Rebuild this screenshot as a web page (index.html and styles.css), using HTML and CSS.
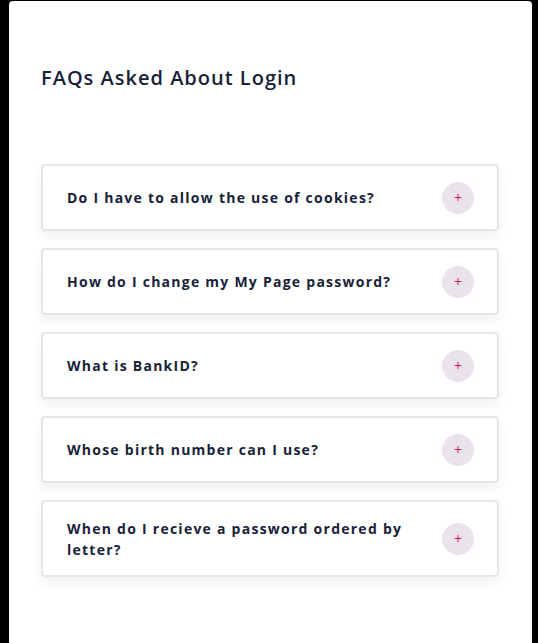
FILE: index.html
```html
<!DOCTYPE html>
<html>
<head>
<meta charset="utf-8">
<link rel="stylesheet" href="styles.css">
</head>
<body>
<div class="card">
  <h2 class="title">FAQs Asked About Login</h2>
  <div class="faq-list">
    <div class="faq-item"><span class="q">Do I have to allow the use of cookies?</span><span class="toggle">+</span></div>
    <div class="faq-item"><span class="q">How do I change my My Page password?</span><span class="toggle">+</span></div>
    <div class="faq-item"><span class="q">What is BankID?</span><span class="toggle">+</span></div>
    <div class="faq-item"><span class="q">Whose birth number can I use?</span><span class="toggle">+</span></div>
    <div class="faq-item"><span class="q">When do I recieve a password ordered by letter?</span><span class="toggle">+</span></div>
  </div>
</div>
</body>
</html>
```
FILE: styles.css
```css
html, body {
  margin: 0;
  padding: 0;
  background: #000;
  height: 100%;
  overflow: hidden;
}
body {
  font-family: "Open Sans", "Noto Sans", sans-serif;
  color: #172238;
}
.card {
  margin: 1px 0 0 9px;
  width: 523px;
  min-height: 700px;
  background: #fff;
  border-radius: 4px;
  padding: 62px 33px 40px 32px;
  box-sizing: border-box;
}
.title {
  margin: 0;
  font-size: 20px;
  font-weight: 600;
  letter-spacing: 1px;
  line-height: 30px;
  color: #172238;
}
.faq-list {
  margin-top: 71px;
  display: flex;
  flex-direction: column;
  gap: 17px;
}
.faq-item {
  display: flex;
  align-items: center;
  justify-content: space-between;
  gap: 20px;
  border: 2px solid #e9e4ec;
  border-radius: 4px;
  padding: 15.5px 23px 15.5px 24px;
  box-shadow: 0 6px 14px rgba(0,0,0,0.06);
  background: #fff;
}
.q {
  font-size: 14px;
  font-weight: 700;
  letter-spacing: 1.25px;
  line-height: 21px;
}
.toggle {
  flex: none;
  width: 32px;
  height: 32px;
  border-radius: 50%;
  background: #ebe3eb;
  color: #c2185b;
  display: flex;
  align-items: center;
  justify-content: center;
  font-size: 14px;
  line-height: 1;
}
```
